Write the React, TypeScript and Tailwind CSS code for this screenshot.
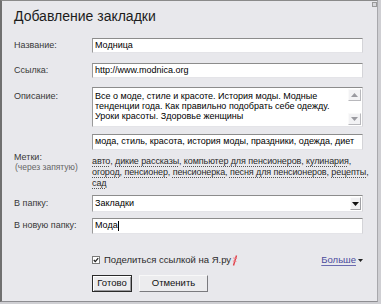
import React from "react";

const inputBox =
  "bg-white border-t border-l border-t-[#8c8c8c] border-l-[#9a9a9a] border-r border-b border-r-[#d4d4d8] border-b-[#e4e4e8]";

function Tag({ t, last }: { t: string; last?: boolean }) {
  return (
    <>
      <span className="underline decoration-dotted decoration-[#555] underline-offset-[2px]">{t}</span>
      {last ? "" : ", "}
    </>
  );
}

function ArrowBtn({ up }: { up?: boolean }) {
  return (
    <div className="w-[13px] h-[12px] bg-[#f2f2f4] border border-t-[#fafafa] border-l-[#fafafa] border-r-[#b8b8bc] border-b-[#b8b8bc] flex items-center justify-center">
      <svg width="7" height="4" viewBox="0 0 7 4">
        {up ? <path d="M0 4 L3.5 0 L7 4 Z" fill="#9a9aa0" /> : <path d="M0 0 L3.5 4 L7 0 Z" fill="#9a9aa0" />}
      </svg>
    </div>
  );
}

export default function App() {
  return (
    <div className="w-[381px] h-[304px] overflow-hidden bg-[#cfcfd3]">
      <div className="relative w-[378px] h-[302px] bg-[#e8e8ec] border-l-2 border-l-[#707070] border-t border-t-[#8a8a8a] border-r border-r-[#a8a8ac] border-b border-b-[#8e8e92] font-['Liberation_Sans',Arial,sans-serif] text-[#383838]">
        <div className="absolute right-[0px] top-[1px] w-[5px] h-[5px] border border-[#9a9a9a] bg-[#d8d8dc]" />
        <div className="pl-[12px] pt-[7px]">
          <h1 className="text-[14px] leading-[16px] text-[#1c1c1c] font-normal">Добавление закладки</h1>

          <div className="flex flex-col text-[9px]">
            {/* Название */}
            <div className="mt-[14px] flex items-center">
              <div className="w-[78px]">Название:</div>
              <div className={`${inputBox} w-[271px] h-[15px] flex items-center pl-[2px] text-black`}>Модница</div>
            </div>
            {/* Ссылка */}
            <div className="mt-[10px] flex items-center">
              <div className="w-[78px]">Ссылка:</div>
              <div className={`${inputBox} w-[271px] h-[15px] flex items-center pl-[2px] text-black`}>
                http://www.modnica.org
              </div>
            </div>
            {/* Описание */}
            <div className="mt-[9px] flex items-start">
              <div className="w-[78px] pt-[4px] leading-[11px]">Описание:</div>
              <div className={`${inputBox} w-[271px] h-[40px] flex`}>
                <div className="flex-1 pl-[2px] pt-[3px] leading-[10px] text-black whitespace-nowrap">
                  <div>Все о моде, стиле и красоте. История моды. Модные</div>
                  <div>тенденции года. Как правильно подобрать себе одежду.</div>
                  <div>Уроки красоты. Здоровье женщины</div>
                </div>
                <div className="w-[13px] flex flex-col justify-between py-[1px] mr-[1px]">
                  <ArrowBtn up />
                  <ArrowBtn />
                </div>
              </div>
            </div>
            {/* Метки */}
            <div className="mt-[7px] flex">
              <div className="w-[78px] flex flex-col justify-center leading-[10px]">
                <div>Метки:</div>
                <div className="text-[#666] text-[8.5px] pl-[1px]">(через запятую)</div>
              </div>
              <div className="w-[271px] flex flex-col">
                <div className={`${inputBox} h-[16px] flex items-center pl-[2px] text-black whitespace-nowrap overflow-hidden`}>
                  мода, стиль, красота, история моды, праздники, одежда, диет
                </div>
                <div className="mt-[6px] leading-[11px] text-[#2a2a2a] whitespace-nowrap tracking-[-0.1px]">
                  <div>
                    <Tag t="авто" /> <Tag t="дикие рассказы" /> <Tag t="компьютер для пенсионеров" /> <Tag t="кулинария" />
                  </div>
                  <div>
                    <Tag t="огород" /> <Tag t="пенсионер" /> <Tag t="пенсионерка" /> <Tag t="песня для пенсионеров" /> <Tag t="рецепты" />
                  </div>
                  <div>
                    <Tag t="сад" last />
                  </div>
                </div>
              </div>
            </div>
            {/* В папку */}
            <div className="mt-[6px] flex items-center">
              <div className="w-[78px]">В папку:</div>
              <div className={`${inputBox} w-[271px] h-[17px] flex items-center pl-[2px] text-black`}>
                <div className="flex-1">Закладки</div>
                <div className="w-[11px] h-[13px] mr-[1px] bg-[#f0f0f2] border border-t-[#fafafa] border-l-[#fafafa] border-r-[#a0a0a4] border-b-[#a0a0a4] flex items-center justify-center">
                  <svg width="7" height="4" viewBox="0 0 7 4">
                    <path d="M0 0 L3.5 4 L7 0 Z" fill="#111" />
                  </svg>
                </div>
              </div>
            </div>
            {/* В новую папку */}
            <div className="mt-[6px] flex items-center">
              <div className="w-[78px]">В новую папку:</div>
              <div className={`${inputBox} w-[271px] h-[16px] flex items-center pl-[2px] text-black`}>
                Мода<span className="inline-block w-px h-[10px] bg-black" />
              </div>
            </div>
            {/* Checkbox */}
            <div className="mt-[20px] flex items-center h-[12px]">
              <div className="w-[78px]" />
              <div className="w-[271px] flex items-center">
                <span className="w-[8px] h-[8px] border border-[#7a7a7a] bg-white flex items-center justify-center">
                  <svg width="6" height="6" viewBox="0 0 6 6">
                    <path d="M0.8 3 L2.3 4.6 L5.2 1.2" stroke="#222" strokeWidth="1.3" fill="none" />
                  </svg>
                </span>
                <span className="ml-[4px] text-[9.5px] text-[#2a2a2a]">Поделиться ссылкой на Я.ру</span>
                <svg width="6" height="11" viewBox="0 0 6 11" className="ml-[1px]">
                  <path d="M4.5 0.5 L1.5 10.5" stroke="#e0404a" strokeWidth="1.4" />
                  <path d="M1.2 3 L5 3.5 M0.8 6 L4.4 6.5" stroke="#f08088" strokeWidth="1" />
                </svg>
                <div className="flex-1" />
                <span className="text-[9.5px] text-[#4a4a9c] underline underline-offset-[2px] decoration-[#6a6ab0]">Больше</span>
                <svg width="5" height="3" viewBox="0 0 5 3" className="ml-[2px]">
                  <path d="M0 0 L2.5 3 L5 0 Z" fill="#222" />
                </svg>
              </div>
            </div>
            {/* Buttons */}
            <div className="mt-[9px] flex">
              <div className="w-[78px]" />
              <div className="flex gap-[7px]">
                <button className="w-[40px] h-[17px] border border-[#2a2a2a] bg-[#ececee] text-[9.5px] text-[#111] shadow-[inset_1px_1px_0_#fff,inset_-1px_-1px_0_#9a9a9e] flex items-center justify-center">
                  Готово
                </button>
                <button className="w-[69px] h-[17px] border border-t-[#f8f8f8] border-l-[#f8f8f8] border-r-[#7a7a7e] border-b-[#7a7a7e] bg-[#ececee] text-[9.5px] text-[#111] flex items-center justify-center">
                  Отменить
                </button>
              </div>
            </div>
          </div>
        </div>
      </div>
    </div>
  );
}
